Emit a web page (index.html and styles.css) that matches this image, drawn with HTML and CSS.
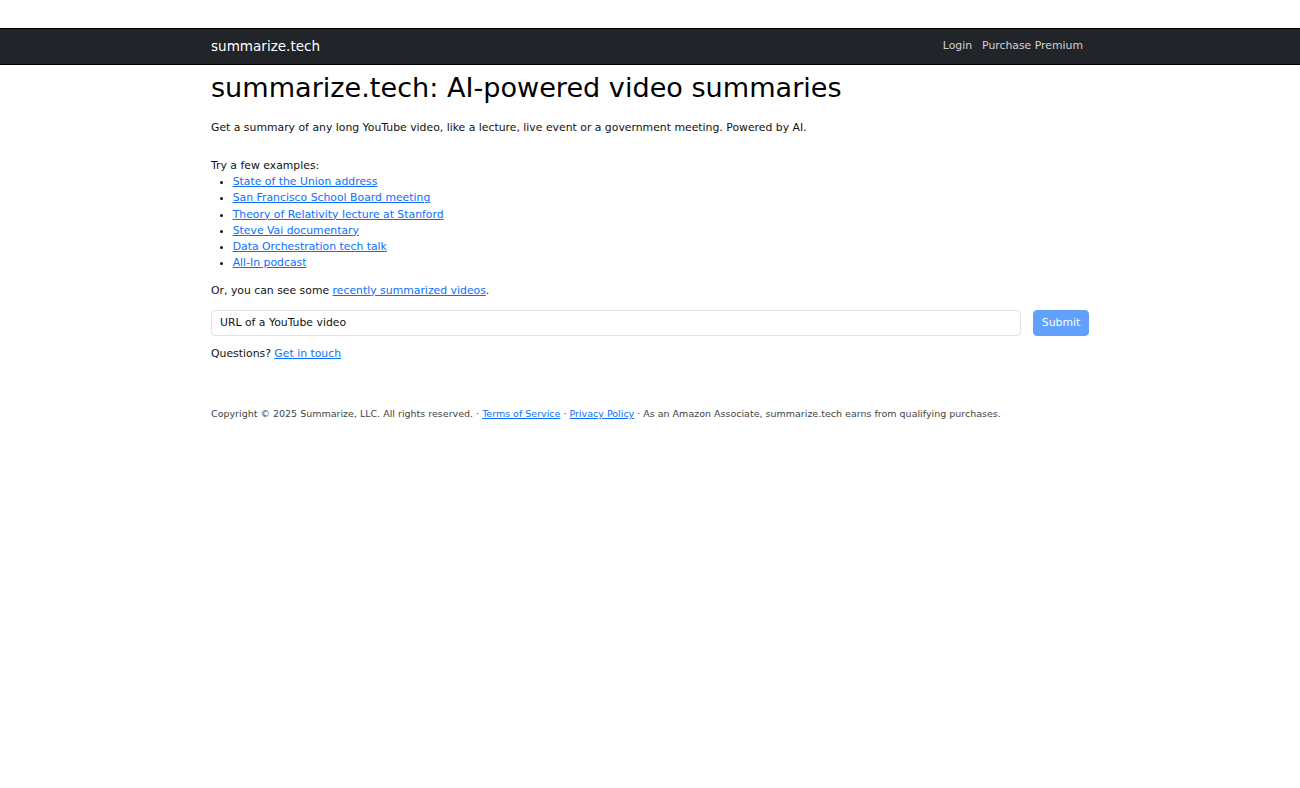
FILE: index.html
```html
<!DOCTYPE html>
<html lang="en">
<head>
    <meta charset="UTF-8">
    <meta name="viewport" content="width=device-width, initial-scale=1.0">
    <title>summarize.tech: AI-powered video summaries</title>
    <link rel="stylesheet" href="styles.css">
</head>
<body>
    <div class="top-space"></div>

    <nav class="navbar">
        <div class="container nav-inner">
            <a class="brand" href="#">summarize.tech</a>
            <div class="nav-links">
                <a class="nav-link" href="#">Login</a>
                <a class="nav-link" href="#">Purchase Premium</a>
            </div>
        </div>
    </nav>

    <main class="container">
        <h1 class="title">summarize.tech: AI-powered video summaries</h1>
        <p class="lead">Get a summary of any long YouTube video, like a lecture, live event or a government meeting. Powered by AI.</p>

        <div class="examples">
            Try a few examples:
            <ul>
                <li><a href="#">State of the Union address</a></li>
                <li><a href="#">San Francisco School Board meeting</a></li>
                <li><a href="#">Theory of Relativity lecture at Stanford</a></li>
                <li><a href="#">Steve Vai documentary</a></li>
                <li><a href="#">Data Orchestration tech talk</a></li>
                <li><a href="#">All-In podcast</a></li>
            </ul>
        </div>

        <p>Or, you can see some <a href="#">recently summarized videos</a>.</p>

        <form class="url-form" onsubmit="return false">
            <input class="url-input" type="text" placeholder="URL of a YouTube video">
            <button class="submit-btn" type="submit" disabled>Submit</button>
        </form>

        <p>Questions? <a href="#">Get in touch</a></p>

        <footer class="footer">
            Copyright © 2025 Summarize, LLC. All rights reserved. · <a href="#">Terms of Service</a> · <a href="#">Privacy Policy</a> · As an Amazon Associate, summarize.tech earns from qualifying purchases.
        </footer>
    </main>
</body>
</html>
```

FILE: styles.css
```css
body {
    font-family: "DejaVu Sans", sans-serif;
    font-size: 10.85px;
    line-height: 1.5;
    color: #111;
    margin: 0;
    padding: 0;
    background-color: white;
}
a {
    color: #0d6efd;
    text-decoration: underline;
}
.container {
    width: 878px;
    margin: 0 auto;
    padding-left: 211px;
    padding-right: 211px;
    box-sizing: content-box;
}
.top-space {
    height: 28px;
}
.navbar {
    background-color: #212529;
    border-top: 1px solid #000;
    border-bottom: 1px solid #000;
}
.nav-inner {
    display: flex;
    align-items: center;
    justify-content: space-between;
    height: 35px;
}
.brand {
    color: white;
    text-decoration: none;
    font-size: 13.55px;
}
.nav-links {
    display: flex;
    padding-right: 6px;
}
.nav-link {
    color: rgba(255, 255, 255, 0.8);
    text-decoration: none;
    padding: 0 5px;
}
.nav-link:last-child {
    padding-right: 0;
}
.title {
    font-size: 27.1px;
    font-weight: 500;
    line-height: 1.2;
    margin: 7px 0 15.5px;
    color: #000;
}
p {
    margin: 0 0 11px;
}
.lead {
    margin-bottom: 21.5px;
}
.examples ul {
    margin: 0 0 11px;
    padding-left: 21.7px;
}
.url-form {
    display: flex;
    gap: 12px;
    margin: 0 0 10px;
}
.url-input {
    flex-grow: 1;
    height: 26px;
    box-sizing: border-box;
    border: 1px solid #dee2e6;
    border-radius: 4px;
    padding: 0 8px;
    font-family: inherit;
    font-size: 10.85px;
}
.url-input::placeholder {
    color: #111;
}
.submit-btn {
    width: 56px;
    height: 26px;
    background-color: #0d6efd;
    color: white;
    border: 1px solid #0d6efd;
    border-radius: 4px;
    font-family: inherit;
    font-size: 10.85px;
    opacity: 0.65;
}
.footer {
    margin-top: 45px;
    font-size: 9.5px;
    color: #444;
}
```
